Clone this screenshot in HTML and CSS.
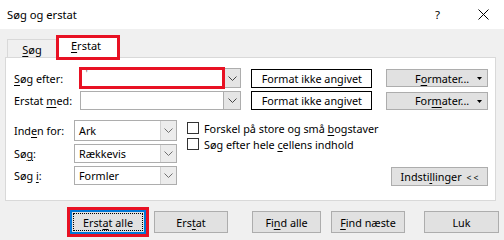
FILE: index.html
```html
<!DOCTYPE html>
<html lang="da">
<head>
<meta charset="utf-8">
<title>Søg og erstat</title>
<link rel="stylesheet" href="styles.css">
</head>
<body>
<div class="titlebar">
  <span class="title">Søg og erstat</span>
  <span class="help">?</span>
  <span class="close"><svg width="11" height="11" viewBox="0 0 11 11"><path d="M0.5 0.5 L10.5 10.5 M10.5 0.5 L0.5 10.5" stroke="#000" stroke-width="1" fill="none"/></svg></span>
</div>
<div class="tabs">
  <div class="tab"><span><u>S</u>øg</span></div>
  <div class="tab active"><span><u>E</u>rstat</span></div>
</div>
<div class="panel">
  <div class="row">
    <span class="label"><u>S</u>øg efter:</span>
    <div class="combo">
      <div class="field hl"><span class="mark">'</span></div>
      <div class="drop"><svg width="9" height="5" viewBox="0 0 9 5"><polyline points="0.5,0.5 4.5,4.5 8.5,0.5" fill="none" stroke="#444" stroke-width="1"/></svg></div>
    </div>
    <div class="fmtbox"><span>Format ikke angivet</span></div>
    <div class="btn fmtbtn"><span>F<u>o</u>rmater...</span><svg class="tri" width="5" height="3" viewBox="0 0 5 3"><path d="M0 0 H5 L2.5 3 Z" fill="#000"/></svg></div>
  </div>
  <div class="row">
    <span class="label">Erstat <u>m</u>ed:</span>
    <div class="combo">
      <div class="field"></div>
      <div class="drop"><svg width="9" height="5" viewBox="0 0 9 5"><polyline points="0.5,0.5 4.5,4.5 8.5,0.5" fill="none" stroke="#444" stroke-width="1"/></svg></div>
    </div>
    <div class="fmtbox"><span>Format ikke angivet</span></div>
    <div class="btn fmtbtn"><span>For<u>m</u>ater...</span><svg class="tri" width="5" height="3" viewBox="0 0 5 3"><path d="M0 0 H5 L2.5 3 Z" fill="#000"/></svg></div>
  </div>
  <div class="lower">
    <div class="opts">
      <span class="label2">Ind<u>e</u>n for:</span>
      <div class="select first"><span class="val">Ark</span><span class="sdrop"><svg width="9" height="5" viewBox="0 0 9 5"><polyline points="0.5,0.5 4.5,4.5 8.5,0.5" fill="none" stroke="#707070" stroke-width="1"/></svg></span></div>
      <span class="label2">Sø<u>g</u>:</span>
      <div class="select"><span class="val">Rækkevis</span><span class="sdrop"><svg width="9" height="5" viewBox="0 0 9 5"><polyline points="0.5,0.5 4.5,4.5 8.5,0.5" fill="none" stroke="#707070" stroke-width="1"/></svg></span></div>
      <span class="label2">Søg <u>i</u>:</span>
      <div class="select"><span class="val">Formler</span><span class="sdrop"><svg width="9" height="5" viewBox="0 0 9 5"><polyline points="0.5,0.5 4.5,4.5 8.5,0.5" fill="none" stroke="#707070" stroke-width="1"/></svg></span></div>
    </div>
    <div class="checks">
      <label class="check"><span class="box"></span><span>Forskel på store og små <u>b</u>ogstaver</span></label>
      <label class="check"><span class="box"></span><span>Søg efter hele <u>c</u>ellens indhold</span></label>
    </div>
    <div class="btn settings"><span>Indsti<u>l</u>linger <span class="lt">&lt; &lt;</span></span></div>
  </div>
</div>
<div class="actions">
  <div class="btn act focus"><span class="dots"><span>Erst<u>a</u>t alle</span></span></div>
  <div class="btn act b2"><span>Ers<u>t</u>at</span></div>
  <div class="btn act b3"><span>Fi<u>n</u>d alle</span></div>
  <div class="btn act b4"><span><u>F</u>ind næste</span></div>
  <div class="btn act b5"><span>Luk</span></div>
</div>
</body>
</html>
```

FILE: styles.css
```css
* { box-sizing: border-box; }
html, body { margin: 0; padding: 0; }
body {
  width: 504px;
  height: 240px;
  overflow: hidden;
  background: #f0f0f0;
  font-family: "Noto Sans", "Open Sans", sans-serif;
  font-size: 10.8px;
  color: #000;
}
u { text-decoration: underline; text-underline-offset: 2px; }

.titlebar {
  height: 29px;
  background: #fff;
  display: flex;
  align-items: center;
  padding-left: 7px;
}
.title { font-size: 11.2px; flex: 1; }
.help { margin-right: 38px; font-size: 11.5px; }
.close { margin-right: 15px; display: flex; }

.tabs {
  height: 28px;
  display: flex;
  align-items: flex-end;
  padding-left: 7px;
}
.tab {
  height: 18px;
  width: 50px;
  border: 1px solid #d9d9d9;
  border-bottom: none;
  display: flex;
  align-items: center;
  justify-content: center;
  padding-top: 1px;
  font-size: 11px;
}
.tab.active {
  position: relative;
  z-index: 2;
  width: 64px;
  height: 25px;
  margin-left: -1px;
  margin-bottom: -3px;
  border: 3px solid #e81123;
  background: #fff;
  padding: 0 4px 4px 0;
}

.panel {
  margin: 0 8px 0 5px;
  height: 144px;
  border: 1px solid #d9d9d9;
  background: #fff;
  padding: 10px 7px 0 8px;
}
.row {
  display: flex;
  align-items: center;
  height: 20px;
}
.row + .row { margin-top: 3px; height: 19px; }
.label { width: 66px; }
.combo { display: flex; height: 100%; width: 162px; }
.field {
  flex: 1;
  border: 1px solid #adadad;
  background: #fff;
  position: relative;
}
.field.hl { outline: 3px solid #e81123; outline-offset: -2px; }
.mark { position: absolute; left: 5px; top: -1px; font-size: 8px; color: #555; }
.drop {
  width: 17px;
  border: 1px solid #adadad;
  border-left: none;
  background: #e5e5e5;
  display: flex;
  align-items: center;
  justify-content: center;
}
.fmtbox {
  margin-left: 10px;
  width: 121px;
  height: 19px;
  border: 1px solid #000;
  display: flex;
  align-items: center;
  justify-content: center;
}
.btn {
  background: #e1e1e1;
  border: 1px solid #adadad;
  display: flex;
  align-items: center;
  justify-content: center;
}
.fmtbtn {
  margin-left: 14px;
  width: 102px;
  height: 18px;
  position: relative;
  padding-left: 10px;
}
.fmtbtn .tri { position: absolute; right: 5px; top: 7px; }

.lower {
  display: flex;
  margin-top: 10px;
  height: 64px;
}
.opts {
  display: grid;
  grid-template-columns: 60px 103px;
  grid-template-rows: 21px 19px 19px;
  row-gap: 3px;
  align-items: center;
}
.select {
  height: 19px;
  border: 1px solid #adadad;
  display: flex;
  background: #fff;
}
.select.first { height: 21px; }
.val { flex: 1; padding-left: 4px; display: flex; align-items: center; }
.sdrop {
  width: 16px;
  border-left: 1px solid #d0d0d0;
  background: #ececec;
  display: flex;
  align-items: center;
  justify-content: center;
}
.checks {
  margin-left: 10px;
  padding-top: 2px;
  display: flex;
  flex-direction: column;
  gap: 4px;
  flex: 1;
}
.check { display: flex; align-items: center; height: 12px; }
.box {
  width: 12px;
  height: 12px;
  border: 1px solid #333;
  background: #fff;
  margin-right: 5px;
}
.settings {
  align-self: flex-end;
  width: 97px;
  height: 19px;
  margin-bottom: -2px;
}
.lt { font-size: 8.5px; margin-left: 2px; }

.actions {
  display: flex;
  align-items: center;
  margin-top: 9px;
  padding-left: 70px;
  height: 24px;
}
.act { height: 22px; }
.focus {
  width: 76px;
  height: 24px;
  border: 2px solid #0078d7;
  outline: 3px solid #e81123;
  padding: 1px;
}
.dots {
  width: 100%;
  height: 100%;
  border: 1px dotted #000;
  display: flex;
  align-items: center;
  justify-content: center;
}
.b2 { width: 74px; margin-left: 8px; }
.b3 { width: 69px; margin-left: 24px; }
.b4 { width: 74px; margin-left: 10px; }
.b5 { width: 75px; margin-left: 19px; }
```
